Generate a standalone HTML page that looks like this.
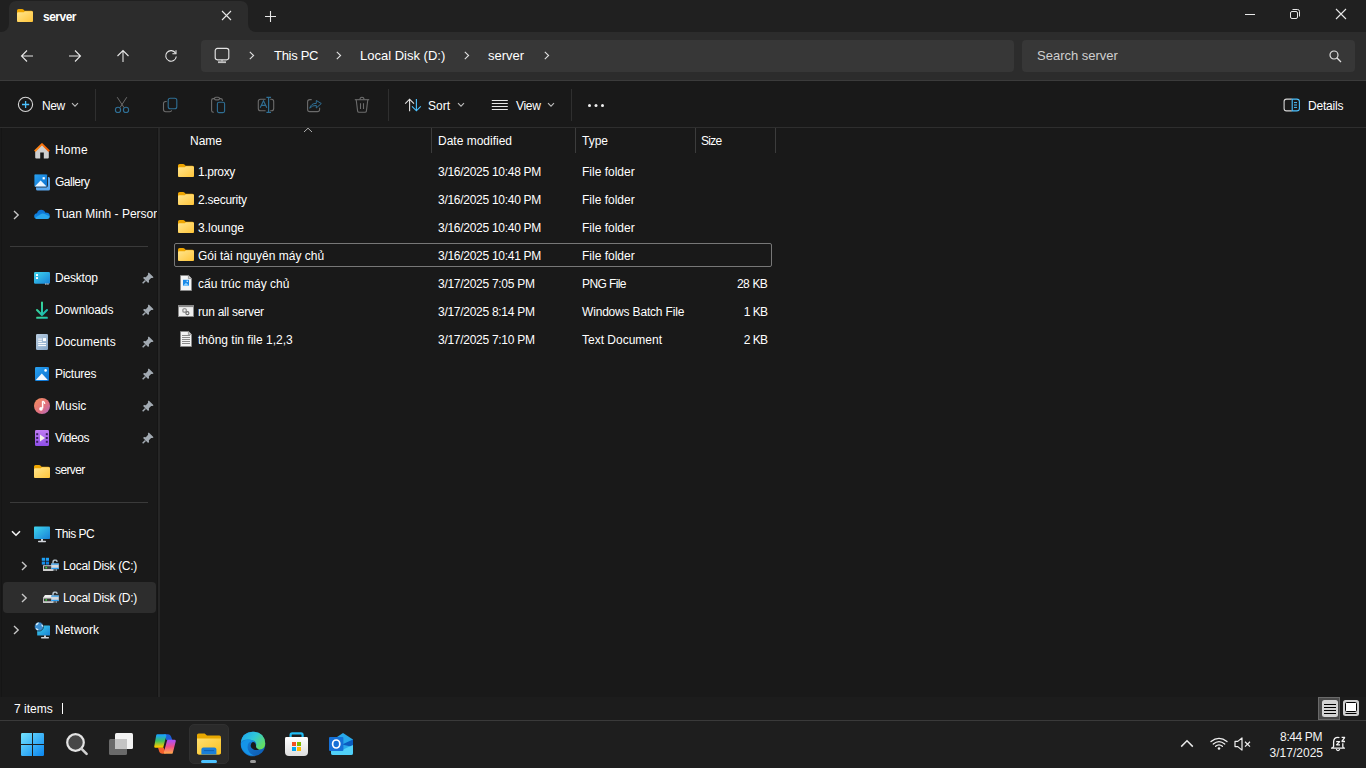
<!DOCTYPE html>
<html><head><meta charset="utf-8">
<style>
*{margin:0;padding:0;box-sizing:border-box}
html,body{width:1366px;height:768px;overflow:hidden;background:#191919;font-family:"Liberation Sans",sans-serif;color:#fff}
.a{position:absolute}
.t{position:absolute;white-space:nowrap;line-height:1}
svg{position:absolute;overflow:visible;z-index:2}
.t{z-index:3}
</style></head><body>
<!-- top chrome -->
<div class="a" style="left:0;top:0;width:1366px;height:80px;background:#2c2c2c"></div>
<div class="a" style="left:0;top:0;width:1366px;height:32px;background:#202020"></div>
<div class="a" style="left:9px;top:1px;width:239px;height:31px;background:#2c2c2c;border-radius:7px 7px 0 0"></div>
<div class="a" style="left:1px;top:24px;width:8px;height:8px;background:#2c2c2c"></div>
<div class="a" style="left:1px;top:24px;width:8px;height:8px;background:#202020;border-bottom-right-radius:8px"></div>
<div class="a" style="left:248px;top:24px;width:8px;height:8px;background:#2c2c2c"></div>
<div class="a" style="left:248px;top:24px;width:8px;height:8px;background:#202020;border-bottom-left-radius:8px"></div>
<div class="a" style="left:0;top:80px;width:1366px;height:1px;background:#3b3b3b"></div>


<svg width="0" height="0" style="position:absolute"><defs>
<linearGradient id="fg" x1="0" y1="0" x2="1" y2="1"><stop offset="0" stop-color="#ffe690"/><stop offset="1" stop-color="#ffc53a"/></linearGradient>
<symbol id="fold" viewBox="0 0 16 13"><path d="M0 1.6Q0 0 1.6 0H5.2Q5.9 0 6.4 .5L7.6 1.8H14.4Q16 1.8 16 3.4V11.4Q16 13 14.4 13H1.6Q0 13 0 11.4Z" fill="#eea500"/><path d="M0 4.6Q0 3.3 1.3 3.3H6.2Q6.8 3.3 7.3 2.8L8 2.2H14.6Q16 2.2 16 3.6V11.4Q16 13 14.4 13H1.6Q0 13 0 11.4Z" fill="url(#fg)"/></symbol>
<symbol id="chev" viewBox="0 0 6 9"><path d="M.8 .8L4.6 4.5L.8 8.2" fill="none" stroke="#e0e0e0" stroke-width="1.1"/></symbol>
<symbol id="pin" viewBox="0 0 11 11"><path d="M6.2 .4L10.6 4.8L9.6 5.6L8.4 5.4L6.3 7.5L6.5 9.2L5.6 10L1 5.4L1.8 4.5L3.5 4.7L5.6 2.6L5.4 1.4Z" fill="#a2aab2"/><path d="M3.2 7.8L.6 10.4" stroke="#a2aab2" stroke-width="1.3"/></symbol>
</defs></svg>
<!-- tab icons -->
<svg style="left:17px;top:9px" width="16" height="13"><use href="#fold"/></svg>
<svg style="left:221px;top:10px" width="11" height="11"><path d="M1 1L10 10M10 1L1 10" stroke="#e8e8e8" stroke-width="1.1"/></svg>
<svg style="left:264px;top:10px" width="13" height="13"><path d="M6.5 1V12M1 6.5H12" stroke="#e8e8e8" stroke-width="1.1"/></svg>
<!-- window controls -->
<div class="a" style="left:1245px;top:14px;width:10px;height:1px;background:#e8e8e8"></div>
<svg style="left:1289px;top:8px" width="12" height="12"><rect x="1.5" y="3.5" width="7" height="7" rx="1.5" fill="none" stroke="#e8e8e8" stroke-width="1"/><path d="M3.5 1.5H8.5Q10.5 1.5 10.5 3.5V8.5" fill="none" stroke="#e8e8e8" stroke-width="1"/></svg>
<svg style="left:1335px;top:8px" width="12" height="12"><path d="M1 1L11 11M11 1L1 11" stroke="#e8e8e8" stroke-width="1.1"/></svg>
<!-- nav buttons -->
<svg style="left:20px;top:49px" width="14" height="14"><path d="M13 7H1.5M7 1.5L1.5 7L7 12.5" fill="none" stroke="#e6e6e6" stroke-width="1.1"/></svg>
<svg style="left:68px;top:49px" width="14" height="14"><path d="M1 7H12.5M7 1.5L12.5 7L7 12.5" fill="none" stroke="#e6e6e6" stroke-width="1.1"/></svg>
<svg style="left:116px;top:49px" width="14" height="14"><path d="M7 13V1.5M1.5 7L7 1.5L12.5 7" fill="none" stroke="#e6e6e6" stroke-width="1.1"/></svg>
<svg style="left:164px;top:49px" width="14" height="14"><path d="M11.6 4.2A5.3 5.3 0 1 0 12.3 7.5" fill="none" stroke="#e6e6e6" stroke-width="1.1"/><path d="M12 1.2V4.8H8.4" fill="none" stroke="#e6e6e6" stroke-width="1.1"/></svg>
<!-- address bar icons -->
<svg style="left:214px;top:47px" width="16" height="17"><rect x="1.2" y="1.4" width="13.6" height="11.4" rx="2.2" fill="none" stroke="#e4e4e4" stroke-width="1.15"/><path d="M4 15.2H12" stroke="#c4c4c4" stroke-width="1.8"/><path d="M8 12.6V14.4" stroke="#c4c4c4" stroke-width="1.5"/></svg>
<svg style="left:249px;top:51px" width="6" height="9"><use href="#chev"/></svg>
<svg style="left:336px;top:51px" width="6" height="9"><use href="#chev"/></svg>
<svg style="left:464px;top:51px" width="6" height="9"><use href="#chev"/></svg>
<svg style="left:544px;top:51px" width="6" height="9"><use href="#chev"/></svg>
<svg style="left:1329px;top:50px" width="13" height="12"><circle cx="5" cy="5" r="4" fill="none" stroke="#e0e0e0" stroke-width="1.2"/><path d="M7.8 7.8L12 12" stroke="#e0e0e0" stroke-width="1.3"/></svg>

<div class="t" style="left:43px;top:11px;font-size:12px;font-weight:bold;letter-spacing:-.5px">server</div>

<!-- address + search -->
<div class="a" style="left:201px;top:40px;width:813px;height:32px;background:#373737;border-radius:4px"></div>
<div class="a" style="left:1022px;top:40px;width:333px;height:32px;background:#373737;border-radius:4px"></div>
<div class="t" style="left:274px;top:49.2px;font-size:13px;color:#fff;letter-spacing:-.3px">This PC</div>
<div class="t" style="left:360px;top:49.2px;font-size:13px;color:#fff">Local Disk (D:)</div>
<div class="t" style="left:488px;top:49.2px;font-size:13px;color:#fff">server</div>
<div class="t" style="left:1037px;top:49.2px;font-size:13px;color:#cfcfcf">Search server</div>

<!-- command bar -->

<!-- command bar icons -->
<svg style="left:17px;top:96px" width="17" height="17"><circle cx="8.5" cy="8.4" r="7.1" fill="none" stroke="#d6d6d6" stroke-width="1.1"/><path d="M8.6 5V12.1M5 8.5H12.2" stroke="#4cc2ff" stroke-width="1.3"/></svg>
<svg style="left:71px;top:102px" width="8" height="6"><path d="M1 1.2L4 4.2L7 1.2" fill="none" stroke="#bdbdbd" stroke-width="1.1"/></svg>
<svg style="left:114px;top:96px" width="16" height="17"><path d="M3.2 1.2L10 11.5M12.8 1.2L6 11.5" stroke="#6c6c6c" stroke-width="1"/><circle cx="4" cy="13.9" r="2.6" fill="#191919" stroke="#2f6f95" stroke-width="1.1"/><circle cx="12" cy="13.9" r="2.6" fill="#191919" stroke="#2f6f95" stroke-width="1.1"/></svg>
<svg style="left:162px;top:97px" width="16" height="16"><path d="M4.7 4.5H3.8Q1.5 4.5 1.5 6.8V12.6Q1.5 14.8 3.8 14.8H7.6Q9.4 14.8 9.6 13.3" fill="none" stroke="#6c6c6c" stroke-width="1.1"/><rect x="6.2" y="1.2" width="8.6" height="10.6" rx="2" fill="none" stroke="#2f6f95" stroke-width="1.1"/></svg>
<svg style="left:210px;top:96px" width="16" height="17"><path d="M3.8 16.2H3.3Q1.6 16.2 1.6 14.5V4.3Q1.6 2.6 3.3 2.6H4.2M9.6 2.6H10.6Q12.4 2.6 12.4 4.3V5" fill="none" stroke="#6c6c6c" stroke-width="1.1"/><rect x="4.5" y="1.3" width="5" height="2.6" rx="1.3" fill="none" stroke="#6c6c6c" stroke-width="1.1"/><rect x="7.4" y="6.2" width="7.2" height="10.4" rx="1.6" fill="none" stroke="#2f6f95" stroke-width="1.1"/></svg>
<svg style="left:257px;top:96px" width="18" height="17"><path d="M8.6 3.3H3.6Q1.3 3.3 1.3 5.6V12.4Q1.3 14.7 3.6 14.7H8.6M13.2 3.3H14.4Q16.7 3.3 16.7 5.6V12.4Q16.7 14.7 14.4 14.7H13.2" fill="none" stroke="#6c6c6c" stroke-width="1.1"/><path d="M3.2 11.7L6.5 4.8L9.8 11.7M4.4 9.4H8.7" fill="none" stroke="#2f6f95" stroke-width="1.1"/><path d="M11.6 1.4V16.4M9.4 1.4H14M9.4 16.4H14" fill="none" stroke="#2f6f95" stroke-width="1.2"/></svg>
<svg style="left:306px;top:97px" width="17" height="16"><path d="M5.7 2.6H3.8Q1.6 2.6 1.6 4.8V12.4Q1.6 14.6 3.8 14.6H11.4Q13.6 14.6 13.6 12.4V10.8" fill="none" stroke="#6c6c6c" stroke-width="1.1"/><path d="M3.7 11.2Q5 6.3 10.3 6.4V3.5L15.3 6.5L10.3 11V8.4Q6.4 8.2 3.7 11.2Z" fill="none" stroke="#2f6f95" stroke-width="1" stroke-linejoin="round"/></svg>
<svg style="left:354px;top:96px" width="16" height="17"><path d="M.8 3.7H15.2" stroke="#6c6c6c" stroke-width="1.1"/><path d="M6 3.4Q6 1.3 8 1.3Q10 1.3 10 3.4" fill="none" stroke="#6c6c6c" stroke-width="1.1"/><path d="M2.2 3.8L3.6 15.1Q3.8 16.2 5 16.2H11Q12.2 16.2 12.4 15.1L13.8 3.8" fill="none" stroke="#6c6c6c" stroke-width="1.1"/><path d="M6.5 7.3V13M9.5 7.3V13" stroke="#6c6c6c" stroke-width="1.1"/></svg>
<svg style="left:404px;top:98px" width="18" height="14"><path d="M5.6 13.2V1.2M1.2 5.6L5.6 1.2L10 5.6" fill="none" stroke="#e6e6e6" stroke-width="1.1"/><path d="M12.4 1V12.8M8 8.4L12.4 12.8L16.8 8.4" fill="none" stroke="#4cc2ff" stroke-width="1.1"/></svg>
<svg style="left:457px;top:102px" width="8" height="6"><path d="M1 1.2L4 4.2L7 1.2" fill="none" stroke="#bdbdbd" stroke-width="1.1"/></svg>
<svg style="left:491px;top:99px" width="18" height="12"><path d="M.8 1.5H16.8M.8 4.5H16.8M.8 7.5H16.8M.8 10.5H16.8" stroke="#e6e6e6" stroke-width="1.1"/></svg>
<svg style="left:547px;top:102px" width="8" height="6"><path d="M1 1.2L4 4.2L7 1.2" fill="none" stroke="#bdbdbd" stroke-width="1.1"/></svg>
<svg style="left:587px;top:103px" width="19" height="5"><circle cx="2.5" cy="2.5" r="1.5" fill="#f0f0f0"/><circle cx="9" cy="2.5" r="1.5" fill="#f0f0f0"/><circle cx="15.5" cy="2.5" r="1.5" fill="#f0f0f0"/></svg>
<svg style="left:1283px;top:98px" width="18" height="14"><path d="M8.8 1.1H3.6Q1.1 1.1 1.1 3.6V10.4Q1.1 12.9 3.6 12.9H8.8" fill="none" stroke="#d6d6d6" stroke-width="1.1"/><path d="M9.2 1.1H13.8Q16.4 1.1 16.4 3.6V10.4Q16.4 12.9 13.8 12.9H9.2Z" fill="none" stroke="#4cc2ff" stroke-width="1.1"/><path d="M11 4.6H14M11 7H14M11 9.4H14" stroke="#4cc2ff" stroke-width="1"/></svg>

<div class="t" style="left:42px;top:100px;font-size:12px;letter-spacing:-.4px">New</div>
<div class="t" style="left:428px;top:100px;font-size:12px">Sort</div>
<div class="t" style="left:516px;top:100px;font-size:12px;letter-spacing:-.3px">View</div>
<div class="t" style="left:1308px;top:100px;font-size:12px;letter-spacing:-.2px">Details</div>
<div class="a" style="left:95px;top:89px;width:1px;height:32px;background:#2f2f2f"></div>
<div class="a" style="left:388px;top:89px;width:1px;height:32px;background:#2f2f2f"></div>
<div class="a" style="left:571px;top:89px;width:1px;height:32px;background:#2f2f2f"></div>
<div class="a" style="left:0;top:127px;width:1366px;height:1px;background:#2e2e2e"></div>

<!-- nav pane -->
<div class="a" style="left:157px;top:128px;width:1px;height:569px;background:#151515"></div>
<div class="a" style="left:158px;top:128px;width:2px;height:569px;background:#262626"></div>
<div class="a" style="left:10px;top:246px;width:138px;height:1px;background:#3a3a3a"></div>
<div class="a" style="left:10px;top:502px;width:138px;height:1px;background:#3a3a3a"></div>
<div class="a" style="left:3px;top:582px;width:153px;height:31px;background:#2d2d2d;border-radius:4px"></div>


<!-- nav pane items -->
<svg width="0" height="0" style="position:absolute"><defs>
<linearGradient id="roof" x1="0" y1="0" x2="1" y2="0"><stop offset="0" stop-color="#ff8c1a"/><stop offset="1" stop-color="#f05a00"/></linearGradient>
<linearGradient id="blu" x1="0" y1="0" x2="1" y2="1"><stop offset="0" stop-color="#2aa2f0"/><stop offset="1" stop-color="#0a6fd0"/></linearGradient>
<linearGradient id="cyan" x1="0" y1="0" x2="1" y2="1"><stop offset="0" stop-color="#3fd6ee"/><stop offset="1" stop-color="#1880d6"/></linearGradient>
<linearGradient id="dl" x1="0" y1="0" x2="1" y2="1"><stop offset="0" stop-color="#45e08f"/><stop offset="1" stop-color="#14b4b8"/></linearGradient>
<linearGradient id="doc" x1="0" y1="0" x2="1" y2="1"><stop offset="0" stop-color="#b9cde0"/><stop offset="1" stop-color="#86a6c8"/></linearGradient>
<linearGradient id="mus" x1="0" y1="0" x2="1" y2="1"><stop offset="0" stop-color="#f5905a"/><stop offset=".6" stop-color="#e07080"/><stop offset="1" stop-color="#a866c8"/></linearGradient>
<linearGradient id="vid" x1="0" y1="0" x2="0" y2="1"><stop offset="0" stop-color="#c07cf4"/><stop offset="1" stop-color="#8e4ee8"/></linearGradient>
<linearGradient id="od1" x1="0" y1="0" x2="0" y2="1"><stop offset="0" stop-color="#0b6ed0"/><stop offset="1" stop-color="#1490e8"/></linearGradient>
<symbol id="lock" viewBox="0 0 8 12"><path d="M2 4.5V3Q2 .8 4 .8Q6 .8 6.2 2.6" fill="none" stroke="#b8c4cc" stroke-width="1.4"/><rect x=".2" y="4.3" width="7.6" height="5.6" fill="#d4d8dc"/><rect x=".2" y="4.3" width="7.6" height="1.2" fill="#2a9df0"/><rect x=".2" y="8.6" width="7.6" height="1.3" fill="#2a9df0"/><path d="M2.8 10V11.6M5.2 10V11.6" stroke="#b8c4cc" stroke-width="1.2"/></symbol>
</defs></svg>
<svg style="left:34px;top:143px" width="16" height="16" viewBox="0 0 16 16"><path d="M1.2 8.3L8 1.5L14.8 8.3V14.4Q14.8 15.4 13.8 15.4H9.8V9.6H6.2V15.4H2.2Q1.2 15.4 1.2 14.4Z" fill="#cfcfcf"/><path d="M.8 8.3L8 1.1L15.2 8.3" fill="none" stroke="url(#roof)" stroke-width="2" stroke-linejoin="round"/></svg>
<svg style="left:34px;top:174px" width="17" height="17" viewBox="0 0 17 17"><rect x="2" y="3" width="14" height="13.5" rx="1.5" fill="#5aa8f0"/><rect x="0" y="0" width="13.5" height="13" rx="1.2" fill="url(#blu)" stroke="#191919" stroke-width=".8"/><path d="M.8 12.4L6.6 6.5L12.6 12.4Z" fill="#e8f4ff"/><rect x="8.6" y="3.2" width="2.2" height="2.2" fill="#fff"/></svg>
<svg style="left:34px;top:208px" width="16" height="12" viewBox="0 0 16 12"><path d="M3.6 11Q.2 11 .2 8.2Q.2 5.6 3 5.3Q3.8 2 7.2 1.8Q10.2 1.8 11.2 4.6Q15.8 4.6 15.8 8Q15.8 11 12.6 11Z" fill="url(#od1)"/><path d="M3.6 11Q1.4 11 1.6 9.4L6.6 6.2Q8.6 4.8 10.8 6L15.6 8.6Q15.4 11 12.6 11Z" fill="#2aa6ee"/></svg>

<svg style="left:34px;top:272px" width="16" height="13" viewBox="0 0 16 13"><rect x="0" y="0" width="16" height="11.8" rx="1.3" fill="url(#cyan)"/><rect x="2" y="2.1" width="2" height="1.9" fill="#fff"/><rect x="2" y="5.1" width="2" height="1.9" fill="#fff"/><rect x="11.2" y="11.4" width="1.3" height="1.3" fill="#ddd"/><rect x="13.3" y="11.4" width="1.3" height="1.3" fill="#ddd"/></svg>
<svg style="left:35px;top:301px" width="14" height="18" viewBox="0 0 14 18"><path d="M7 1.5V14M2 9L7 14L12 9" fill="none" stroke="url(#dl)" stroke-width="2" stroke-linecap="round"/><rect x="1.2" y="15.8" width="11.6" height="2" rx=".6" fill="url(#dl)"/></svg>
<svg style="left:36px;top:334px" width="12" height="16" viewBox="0 0 12 16"><rect x="0" y="0" width="12" height="16" rx="1.3" fill="url(#doc)"/><path d="M2.2 5.1H5.9M2.2 7.3H5.9M2.2 9.6H10M2.2 11.6H10" stroke="#fff" stroke-width="1"/><rect x="7" y="4.1" width="3" height="3" fill="#fff"/></svg>
<svg style="left:35px;top:367px" width="14" height="14" viewBox="0 0 14 14"><rect x="0" y="0" width="14" height="14" rx="1.3" fill="url(#blu)"/><path d="M.8 13L6.8 6.6L12.8 13Z" fill="#f2f8ff"/><circle cx="10.6" cy="3.4" r="1.3" fill="#fff"/></svg>
<svg style="left:34px;top:398px" width="16" height="16" viewBox="0 0 16 16"><circle cx="8" cy="8" r="8" fill="url(#mus)"/><path d="M8.6 3.2V10.4" stroke="#fff" stroke-width="1.5"/><path d="M8.6 3.2Q10.6 4 10.8 5.8" stroke="#fff" stroke-width="1.4" fill="none"/><circle cx="7" cy="10.9" r="1.8" fill="#fff"/></svg>
<svg style="left:35px;top:430px" width="14" height="16" viewBox="0 0 14 16"><rect x="0" y="0" width="14" height="16" rx="1.3" fill="url(#vid)"/><rect x="1.2" y="3.2" width="2" height="2" fill="#3a2060"/><rect x="1.2" y="7" width="2" height="2" fill="#3a2060"/><rect x="1.2" y="10.8" width="2" height="2" fill="#3a2060"/><rect x="10.8" y="3.2" width="2" height="2" fill="#3a2060"/><rect x="10.8" y="7" width="2" height="2" fill="#3a2060"/><rect x="10.8" y="10.8" width="2" height="2" fill="#3a2060"/><path d="M5 4.6L10 8L5 11.4Z" fill="#f4f0e8"/></svg>
<svg style="left:34px;top:465px" width="16" height="13"><use href="#fold"/></svg>

<svg style="left:34px;top:526px" width="16" height="17" viewBox="0 0 16 17"><rect x="0" y=".6" width="16" height="12.5" rx=".8" fill="url(#cyan)"/><rect x="7" y="13" width="2" height="2.4" fill="#c8ccd2"/><rect x="4" y="14.8" width="8" height="1.4" rx=".6" fill="#d2d6dc"/></svg>
<svg style="left:41px;top:557px" width="18" height="16" viewBox="0 0 18 16"><rect x=".8" y=".8" width="3.2" height="3" fill="#1ea0f4"/><rect x="4.8" y=".8" width="3.2" height="3" fill="#1ea0f4"/><rect x=".8" y="4.6" width="3.2" height="3" fill="#1a90ea"/><rect x="4.8" y="4.6" width="3.2" height="3" fill="#0f7fe0"/><rect x="2" y="8.2" width="10" height="5.8" rx=".6" fill="#cfcfcf"/><rect x="2.9" y="9.2" width="8.4" height="2.8" fill="#3a3a3a"/><circle cx="5.2" cy="10.6" r=".9" fill="#3bdc3b"/><svg x="10" y="1.2" width="8" height="14" viewBox="0 0 8 12"><use href="#lock"/></svg></svg>
<svg style="left:41px;top:589px" width="18" height="16" viewBox="0 0 18 16"><path d="M2.2 8.6L4 6H11V9H2.2Z" fill="#f0f0f0"/><rect x="2" y="8.6" width="10" height="5.4" rx=".6" fill="#c8c8c8"/><rect x="2.9" y="9.6" width="8.4" height="2.6" fill="#3a3a3a"/><circle cx="5.2" cy="10.9" r=".9" fill="#3bdc3b"/><svg x="10" y="1.2" width="8" height="14" viewBox="0 0 8 12"><use href="#lock"/></svg></svg>
<svg style="left:34px;top:621px" width="16" height="18" viewBox="0 0 16 18"><rect x="3.2" y="4.4" width="12.8" height="10.2" rx=".6" fill="url(#cyan)"/><rect x="10" y="14.4" width="2" height="2" fill="#c8ccd2"/><rect x="7" y="16" width="8" height="1.4" rx=".6" fill="#d2d6dc"/><circle cx="5" cy="5.6" r="4.5" fill="#3c8ed0" stroke="#191919" stroke-width=".6"/><path d="M1.6 3.6Q3 1.2 5 1.6Q4.6 3.4 2.6 4.4ZM1.6 7Q3 7 4.6 8.6Q4 9.8 2.4 8.8ZM7.4 3.2Q9 3.6 9.4 5.4Q8.4 6 7.6 5Z" fill="#d8f0fc"/></svg>

<svg style="left:142px;top:272px" width="12" height="12"><use href="#pin"/></svg>
<svg style="left:142px;top:304px" width="12" height="12"><use href="#pin"/></svg>
<svg style="left:142px;top:336px" width="12" height="12"><use href="#pin"/></svg>
<svg style="left:142px;top:368px" width="12" height="12"><use href="#pin"/></svg>
<svg style="left:142px;top:400px" width="12" height="12"><use href="#pin"/></svg>
<svg style="left:142px;top:432px" width="12" height="12"><use href="#pin"/></svg>

<svg style="left:13px;top:210px" width="7" height="10"><path d="M1 1L5.2 5L1 9" fill="none" stroke="#c8c8c8" stroke-width="1.35"/></svg>
<svg style="left:11px;top:530px" width="10" height="7"><path d="M1 1.2L5 5.2L9 1.2" fill="none" stroke="#f2f2f2" stroke-width="1.6"/></svg>
<svg style="left:21px;top:561px" width="7" height="10"><path d="M1 1L5.2 5L1 9" fill="none" stroke="#c8c8c8" stroke-width="1.35"/></svg>
<svg style="left:21px;top:593px" width="7" height="10"><path d="M1 1L5.2 5L1 9" fill="none" stroke="#c8c8c8" stroke-width="1.35"/></svg>
<svg style="left:13px;top:625px" width="7" height="10"><path d="M1 1L5.2 5L1 9" fill="none" stroke="#c8c8c8" stroke-width="1.35"/></svg>

<div class="a" style="left:0;top:128px;width:157px;height:569px;overflow:hidden;z-index:3">
<div class="t" style="left:55px;top:144px;font-size:12px;margin-top:-128px;letter-spacing:0.2px">Home</div>
<div class="t" style="left:55px;top:176px;font-size:12px;margin-top:-128px;letter-spacing:-0.5px">Gallery</div>
<div class="t" style="left:55px;top:208px;font-size:12px;margin-top:-128px">Tuan Minh - Personal</div>
<div class="t" style="left:55px;top:272px;font-size:12px;margin-top:-128px;letter-spacing:-0.2px">Desktop</div>
<div class="t" style="left:55px;top:304px;font-size:12px;margin-top:-128px;letter-spacing:-0.12px">Downloads</div>
<div class="t" style="left:55px;top:336px;font-size:12px;margin-top:-128px">Documents</div>
<div class="t" style="left:55px;top:368px;font-size:12px;margin-top:-128px;letter-spacing:-0.28px">Pictures</div>
<div class="t" style="left:55px;top:400px;font-size:12px;margin-top:-128px">Music</div>
<div class="t" style="left:55px;top:432px;font-size:12px;margin-top:-128px;letter-spacing:-0.4px">Videos</div>
<div class="t" style="left:55px;top:464px;font-size:12px;margin-top:-128px;letter-spacing:-0.6px">server</div>
<div class="t" style="left:55px;top:528px;font-size:12px;margin-top:-128px;letter-spacing:-0.5px">This PC</div>
<div class="t" style="left:63px;top:560px;font-size:12px;margin-top:-128px;letter-spacing:-0.32px">Local Disk (C:)</div>
<div class="t" style="left:63px;top:592px;font-size:12px;margin-top:-128px;letter-spacing:-0.32px">Local Disk (D:)</div>
<div class="t" style="left:55px;top:624px;font-size:12px;margin-top:-128px">Network</div>
</div>


<!-- file list -->
<div class="a" style="left:431px;top:128px;width:1px;height:25px;background:#3c3c3c"></div>
<div class="a" style="left:575px;top:128px;width:1px;height:25px;background:#3c3c3c"></div>
<div class="a" style="left:695px;top:128px;width:1px;height:25px;background:#3c3c3c"></div>
<div class="a" style="left:775px;top:128px;width:1px;height:25px;background:#3c3c3c"></div>
<svg style="left:303px;top:127px" width="10" height="6"><path d="M1 5L5 1.2L9 5" fill="none" stroke="#b0b0b0" stroke-width="1"/></svg>
<div class="t" style="left:190px;top:135px;font-size:12px">Name</div>
<div class="t" style="left:438px;top:135px;font-size:12px">Date modified</div>
<div class="t" style="left:582px;top:135px;font-size:12px">Type</div>
<div class="t" style="left:701px;top:135px;font-size:12px;letter-spacing:-.75px">Size</div>

<div class="a" style="left:174px;top:243px;width:598px;height:24px;border:1px solid #777;border-radius:2px"></div>

<svg style="left:178px;top:164px" width="16" height="13"><use href="#fold"/></svg>
<svg style="left:178px;top:192px" width="16" height="13"><use href="#fold"/></svg>
<svg style="left:178px;top:220px" width="16" height="13"><use href="#fold"/></svg>
<svg style="left:178px;top:248px" width="16" height="13"><use href="#fold"/></svg>
<svg style="left:180px;top:275px" width="12" height="16" viewBox="0 0 12 16"><path d="M.5 .5H8.6L11.5 3.4V15.5H.5Z" fill="#f4f4f4" stroke="#8a8a8a" stroke-width=".9"/><path d="M8.4 .5V3.6H11.5" fill="#d0d0d0" stroke="#8a8a8a" stroke-width=".8"/><rect x="3" y="4.8" width="6" height="6" fill="#1a8ae8"/><path d="M3 10.8L6 7.8L9 10.8Z" fill="#8cd0ff"/><rect x="6.6" y="5.6" width="1.3" height="1.3" fill="#e0f0ff"/></svg>
<svg style="left:178px;top:305px" width="16" height="12" viewBox="0 0 16 12"><rect x=".5" y=".5" width="15" height="11" fill="#f0f0f0" stroke="#8a8a8a" stroke-width=".9"/><rect x=".5" y=".5" width="15" height="1.6" fill="#8a8a8a"/><circle cx="6.6" cy="5.4" r="1.8" fill="none" stroke="#9a9a9a" stroke-width="1.4"/><circle cx="9.4" cy="8.2" r="1.5" fill="none" stroke="#707070" stroke-width="1.2"/></svg>
<svg style="left:180px;top:331px" width="12" height="16" viewBox="0 0 12 16"><path d="M.5 .5H8.6L11.5 3.4V15.5H.5Z" fill="#f4f4f4" stroke="#8a8a8a" stroke-width=".9"/><path d="M8.4 .5V3.6H11.5" fill="#d0d0d0" stroke="#8a8a8a" stroke-width=".8"/><path d="M2 4.5H10M2 6.5H10M2 8.5H10M2 10.5H10M2 12.5H10" stroke="#8c8c8c" stroke-width="1"/></svg>

<div class="t" style="left:198px;top:166px;font-size:12px;letter-spacing:-.33px">1.proxy</div>
<div class="t" style="left:198px;top:194px;font-size:12px;letter-spacing:-.25px">2.security</div>
<div class="t" style="left:198px;top:222px;font-size:12px">3.lounge</div>
<div class="t" style="left:198px;top:250px;font-size:12px">Gói tài nguyên máy chủ</div>
<div class="t" style="left:198px;top:278px;font-size:12px">cấu trúc máy chủ</div>
<div class="t" style="left:198px;top:306px;font-size:12px;letter-spacing:-.25px">run all server</div>
<div class="t" style="left:198px;top:334px;font-size:12px">thông tin file 1,2,3</div>

<div class="t" style="left:438px;top:166px;font-size:12px;letter-spacing:-.28px">3/16/2025 10:48 PM</div>
<div class="t" style="left:438px;top:194px;font-size:12px;letter-spacing:-.28px">3/16/2025 10:40 PM</div>
<div class="t" style="left:438px;top:222px;font-size:12px;letter-spacing:-.28px">3/16/2025 10:40 PM</div>
<div class="t" style="left:438px;top:250px;font-size:12px;letter-spacing:-.28px">3/16/2025 10:41 PM</div>
<div class="t" style="left:438px;top:278px;font-size:12px;letter-spacing:-.28px">3/17/2025 7:05 PM</div>
<div class="t" style="left:438px;top:306px;font-size:12px;letter-spacing:-.28px">3/17/2025 8:14 PM</div>
<div class="t" style="left:438px;top:334px;font-size:12px;letter-spacing:-.28px">3/17/2025 7:10 PM</div>

<div class="t" style="left:582px;top:166px;font-size:12px">File folder</div>
<div class="t" style="left:582px;top:194px;font-size:12px">File folder</div>
<div class="t" style="left:582px;top:222px;font-size:12px">File folder</div>
<div class="t" style="left:582px;top:250px;font-size:12px">File folder</div>
<div class="t" style="left:582px;top:278px;font-size:12px;letter-spacing:-.6px">PNG File</div>
<div class="t" style="left:582px;top:306px;font-size:12px;letter-spacing:-.18px">Windows Batch File</div>
<div class="t" style="left:582px;top:334px;font-size:12px">Text Document</div>

<div class="t" style="right:599px;top:278px;font-size:12px;letter-spacing:-.7px;word-spacing:.8px">28 KB</div>
<div class="t" style="right:599px;top:306px;font-size:12px;letter-spacing:-.9px;word-spacing:.9px">1 KB</div>
<div class="t" style="right:599px;top:334px;font-size:12px;letter-spacing:-.9px;word-spacing:.9px">2 KB</div>

<!-- status bar -->
<div class="a" style="left:0;top:697px;width:1366px;height:23px;background:#1c1c1c"></div>
<div class="a" style="left:1px;top:128px;width:1px;height:569px;background:#151515"></div>
<div class="t" style="left:14px;top:703px;font-size:12px">7 items</div>
<div class="a" style="left:62px;top:703px;width:1px;height:11px;background:#fff"></div>

<!-- taskbar -->
<div class="a" style="left:0;top:720px;width:1366px;height:48px;background:#1e1e1e"></div>
<div class="a" style="left:0;top:720px;width:1366px;height:1px;background:#3a3a3a"></div>

<!-- taskbar icons -->
<svg width="0" height="0" style="position:absolute"><defs>
<linearGradient id="win" gradientUnits="userSpaceOnUse" x1="0" y1="0" x2="23" y2="23"><stop offset="0" stop-color="#74e4ff"/><stop offset="1" stop-color="#0a86f0"/></linearGradient>
<linearGradient id="cpl" x1="0" y1="0" x2="0" y2="1"><stop offset="0" stop-color="#1aa4f4"/><stop offset=".5" stop-color="#3fc060"/><stop offset="1" stop-color="#f8c800"/></linearGradient>
<linearGradient id="cpr" x1="0" y1="0" x2="0" y2="1"><stop offset="0" stop-color="#b050f0"/><stop offset=".5" stop-color="#f0508a"/><stop offset="1" stop-color="#ffa050"/></linearGradient>
<linearGradient id="edt" x1="0" y1=".2" x2="1" y2=".8"><stop offset="0" stop-color="#1ea8f0"/><stop offset=".45" stop-color="#30c8d8"/><stop offset="1" stop-color="#6ae050"/></linearGradient>
<linearGradient id="edb" x1="0" y1="0" x2="1" y2="1"><stop offset="0" stop-color="#1a8ae0"/><stop offset="1" stop-color="#0c58b0"/></linearGradient>
<linearGradient id="bag" x1="0" y1="0" x2="0" y2="1"><stop offset="0" stop-color="#ffffff"/><stop offset="1" stop-color="#dedede"/></linearGradient>
<linearGradient id="exf" x1="0" y1="0" x2="1" y2="1"><stop offset="0" stop-color="#ffe070"/><stop offset="1" stop-color="#f8c020"/></linearGradient>
</defs></svg>
<svg style="left:21px;top:733px" width="23" height="23" viewBox="0 0 23 23"><path d="M0 1.2Q0 0 1.2 0H11V11H0Z" fill="url(#win)"/><path d="M12 0H21.8Q23 0 23 1.2V11H12Z" fill="url(#win)"/><path d="M0 12H11V23H1.2Q0 23 0 21.8Z" fill="url(#win)"/><path d="M12 12H23V21.8Q23 23 21.8 23H12Z" fill="url(#win)"/></svg>
<svg style="left:65px;top:732px" width="24" height="25" viewBox="0 0 24 25"><circle cx="10.5" cy="10.5" r="8.3" fill="#474747" stroke="#e4e4e4" stroke-width="2.2"/><path d="M16.6 16.8L21.6 21.8" stroke="#d0d0d0" stroke-width="2.6" stroke-linecap="round"/></svg>
<svg style="left:109px;top:732px" width="25" height="24" viewBox="0 0 25 24"><rect x="0" y="7" width="18" height="16" rx="1.5" fill="#6a6a6a"/><rect x="6" y="1" width="18" height="16" rx="1.5" fill="#f2f2f2"/><rect x="6" y="7" width="12" height="10" fill="#c4c4c4"/></svg>
<svg style="left:153px;top:733px" width="24" height="22" viewBox="0 0 24 22"><path d="M10.5 1.2H15Q17 1.2 17.8 3L19.4 7H13.4L12 3.6Z" fill="#1c5ed8"/><path d="M5 14.6H10.6L12.2 18.6L12.6 20.8H9.4Q7.2 20.8 6.4 19Z" fill="#f4602c"/><path d="M4.4 2.4H12.2L9.2 13.6H2.4Z" fill="url(#cpl)" stroke="url(#cpl)" stroke-width="2.4" stroke-linejoin="round"/><path d="M15.2 7.9H21.6L18.6 19.6H12Z" fill="url(#cpr)" stroke="url(#cpr)" stroke-width="2.4" stroke-linejoin="round"/></svg>
<div class="a" style="left:189px;top:724px;width:40px;height:40px;background:#2a2a2a;border-radius:5px;border:1px solid #303030"></div>
<svg style="left:196px;top:732px" width="26" height="24" viewBox="0 0 26 24"><path d="M1 3Q1 1.4 2.6 1.4H8.6L11 3.6H23.4Q25 3.6 25 5.2V20.6Q25 22.6 23 22.6H3Q1 22.6 1 20.6Z" fill="#e8a800"/><path d="M1 6.6H25V20.6Q25 22.6 23 22.6H3Q1 22.6 1 20.6Z" fill="url(#exf)"/><path d="M5.4 22.6V17.6Q5.4 15.6 7.4 15.6H18.4Q20.4 15.6 20.4 17.6V22.6Z" fill="#1a7fd8"/><path d="M8 18.6H18" stroke="#0f5fb0" stroke-width="1"/></svg>
<div class="a" style="left:201px;top:760px;width:16px;height:3px;background:#4cc2ff;border-radius:2px;z-index:3"></div>
<svg style="left:240px;top:731px" width="26" height="26" viewBox="0 0 26 26"><circle cx="13" cy="13" r="12.3" fill="url(#edb)"/><path d="M.8 11.6Q2 1 13 .7Q24.6 1 25.2 12.4Q25.2 18 19.6 18.4Q15.4 18.6 16.2 14.4Q16.8 11.2 14 9.8Q8 7.6 3 9.2Q1.6 9.8 .8 11.6Z" fill="url(#edt)"/><path d="M16.2 14.6Q15 10.4 12 10.6Q7.2 11 7.6 17Q8.4 22.4 14 24.4Q10 25 6 22.4Q.8 18.6 1 12.4Q3.6 8.6 9 8.6Q14.6 8.8 16.2 14.6Z" fill="#1594e8"/><path d="M12.8 11Q15.8 11.4 16 14.6Q15.6 17.4 19 18.2Q17 19.6 14 18.8Q11 18 10.6 15Q10.6 12 12.8 11Z" fill="#191919"/></svg>
<div class="a" style="left:250px;top:760px;width:6px;height:3px;background:#9a9a9a;border-radius:2px;z-index:3"></div>
<svg style="left:284px;top:732px" width="25" height="25" viewBox="0 0 25 25"><path d="M6.6 7V3Q6.6 1.4 8.2 1.4H17Q18.6 1.4 18.6 3V7" fill="none" stroke="#20bcf4" stroke-width="2.2"/><path d="M1 6.4Q1 5 2.4 5H22.6Q24 5 24 6.4V20Q24 24 20 24H5Q1 24 1 20Z" fill="url(#bag)"/><rect x="8" y="10" width="4" height="4" fill="#f25022"/><rect x="13" y="10" width="4" height="4" fill="#7fba00"/><rect x="8" y="15" width="4" height="4" fill="#00a4ef"/><rect x="13" y="15" width="4" height="4" fill="#ffb900"/></svg>
<svg style="left:328px;top:732px" width="26" height="24" viewBox="0 0 26 24"><path d="M3 9L15 1L25 7.6V21Q25 23 23 23H5Q3 23 3 21Z" fill="#28a8ea"/><path d="M14 12.6L25 7.6V15Z" fill="#0a5cc0"/><path d="M3 13L14 18L25 13V21Q25 23 23 23H5Q3 23 3 21Z" fill="#50d0f8"/><rect x="1" y="5" width="14.4" height="14" rx="1" fill="#1670d6"/><ellipse cx="8.2" cy="12" rx="3.6" ry="4" fill="none" stroke="#fff" stroke-width="1.7"/></svg>

<!-- tray -->
<svg style="left:1180px;top:739px" width="14" height="9"><path d="M1.2 7.6L7 1.8L12.8 7.6" fill="none" stroke="#e8e8e8" stroke-width="1.5"/></svg>
<svg style="left:1210px;top:737px" width="18" height="13" viewBox="0 0 18 13"><path d="M1 4.6Q9 -2 17 4.6M3.3 7Q9 2.2 14.7 7M5.6 9.3Q9 6.4 12.4 9.3" fill="none" stroke="#f0f0f0" stroke-width="1.3" stroke-linecap="round"/><circle cx="9" cy="11.5" r="1.3" fill="#f0f0f0"/></svg>
<svg style="left:1234px;top:737px" width="18" height="14" viewBox="0 0 18 14"><path d="M1 4.4H3.8L8 .9V13.1L3.8 9.6H1Z" fill="none" stroke="#f0f0f0" stroke-width="1.2" stroke-linejoin="round"/><path d="M11 4.8L16 9.6M16 4.8L11 9.6" stroke="#f0f0f0" stroke-width="1.2"/></svg>
<div class="t" style="right:44px;top:731px;font-size:12px;color:#f4f4f4;letter-spacing:-.4px">8:44 PM</div>
<div class="t" style="right:43px;top:747px;font-size:12px;color:#f4f4f4">3/17/2025</div>
<svg style="left:1326px;top:732px" width="24" height="24" viewBox="0 0 24 24"><path d="M13.4 5.8Q12.8 5.3 12 5.3Q7.6 5.3 7.6 10V14.4Q7.4 15.6 5.6 16.2H18.4Q16.8 15.6 16.8 14.4V11.2" fill="none" stroke="#f4f4f4" stroke-width="1.3" stroke-linejoin="round"/><path d="M10.4 17Q10.6 18.6 12 18.6Q13.4 18.6 13.6 17" fill="none" stroke="#f4f4f4" stroke-width="1.2"/><path d="M10.2 9.6H13.8L10.4 12.9H14" fill="none" stroke="#f4f4f4" stroke-width="1.3" stroke-linejoin="bevel"/><path d="M15.6 5.4H18.8L15.8 9.5H19" fill="none" stroke="#f4f4f4" stroke-width="1.3" stroke-linejoin="bevel"/></svg>

<!-- status bar view buttons -->
<div class="a" style="left:1318px;top:697px;width:22px;height:23px;background:#4a4a4a;border:1px solid #6a6a6a"></div>
<svg style="left:1322px;top:700px" width="16" height="17" viewBox="0 0 16 17"><rect x="0" y="0" width="16" height="17" rx="2.5" fill="#d4d4d4"/><path d="M2 4.5H14M2 7.5H14M2 10.5H14M2 13.5H14" stroke="#000" stroke-width="1"/></svg>
<svg style="left:1343px;top:700px" width="16" height="16" viewBox="0 0 16 16"><rect x="0" y="0" width="16" height="16" rx="2.5" fill="#d0d0d0"/><rect x="2.5" y="2.5" width="11" height="9" rx="1" fill="#fff" stroke="#000" stroke-width="1"/><path d="M2.5 13.5H13.5" stroke="#000" stroke-width="1"/></svg>

</body></html>
